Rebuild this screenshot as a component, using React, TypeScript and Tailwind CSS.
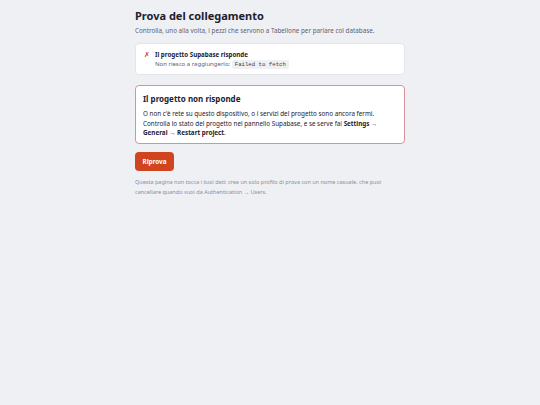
import React from 'react';

const App: React.FC = () => {
  return (
    <div className="min-h-[405px] w-full bg-[#eff0f4] font-['Noto_Sans',sans-serif] text-[#1d2130]">
      <div className="mx-auto flex w-[270px] flex-col pt-[9px]">
        <h1 className="text-[11px] font-bold leading-[14px]">Prova del collegamento</h1>
        <p className="mt-[3px] text-[6.3px] leading-[10px] text-[#5d6270]">
          Controlla, uno alla volta, i pezzi che servono a Tabellone per parlare col database.
        </p>

        <div className="mt-[7px] flex gap-[5px] rounded-[4px] border border-[#e3e5ea] bg-white px-[8px] pb-[5px] pt-[6px]">
          <span className="w-[6px] text-[7px] leading-[9px] text-[#c43a3a]">✗</span>
          <div className="flex flex-col gap-[1px]">
            <span className="text-[6.2px] font-bold leading-[9px]">Il progetto Supabase risponde</span>
            <span className="text-[6px] leading-[9px] text-[#5d6270]">
              Non riesco a raggiungerlo:{' '}
              <code className="rounded-[2px] bg-[#eef0f3] px-[3px] py-[1px] font-['Liberation_Mono',monospace] text-[5.7px] text-[#3a3f4c]">
                Failed to fetch
              </code>
            </span>
          </div>
        </div>

        <div className="mt-[10px] rounded-[4px] border border-[#d6939b] bg-white px-[7px] pb-[5px] pt-[7px]">
          <h2 className="text-[8px] font-bold leading-[12px]">Il progetto non risponde</h2>
          <p className="mt-[4px] text-[6.3px] leading-[9.7px] text-[#1d2130]">
            O non c'è rete su questo dispositivo, o i servizi del progetto sono ancora fermi. Controlla lo stato del progetto nel pannello Supabase, e se serve fai{' '}
            <b>Settings → General → Restart project</b>.
          </p>
        </div>

        <button className="mt-[8px] h-[19px] w-[39px] rounded-[4px] bg-[#d0441e] text-[6.3px] font-bold text-white">
          Riprova
        </button>

        <p className="mt-[6px] text-[5.5px] leading-[10px] text-[#8a8f9b]">
          Questa pagina non tocca i tuoi dati: crea un solo profilo di prova con un nome casuale, che puoi cancellare quando vuoi da Authentication → Users.
        </p>
      </div>
    </div>
  );
};

export default App;
